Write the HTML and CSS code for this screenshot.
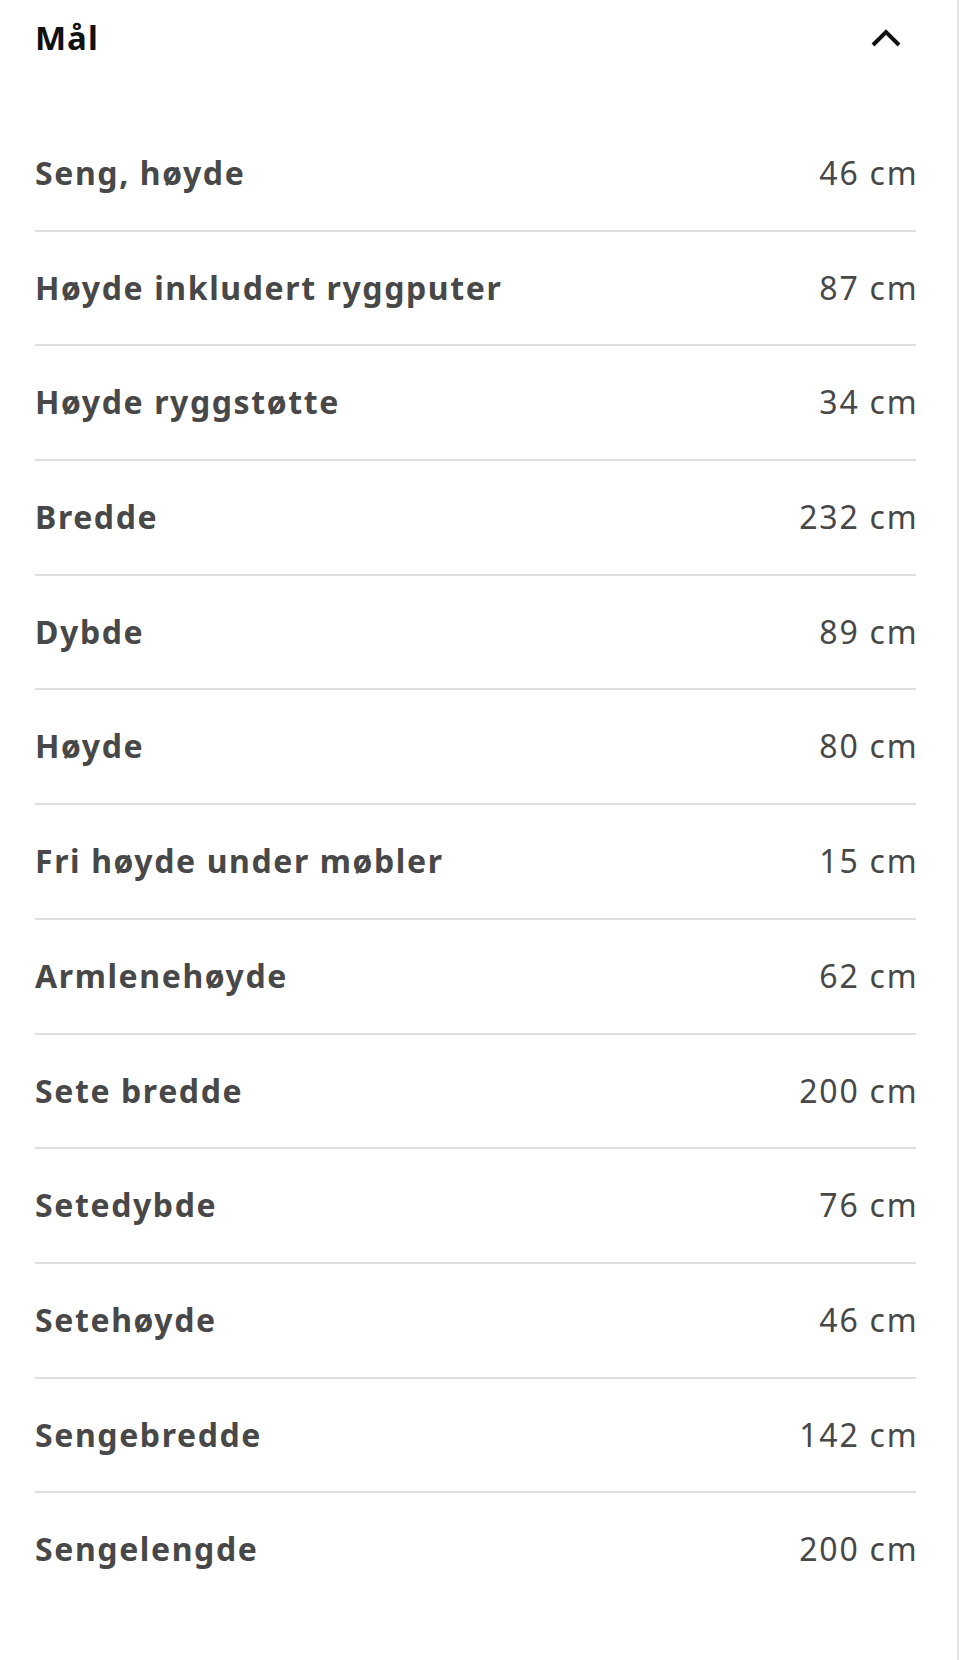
FILE: index.html
```html
<!DOCTYPE html>
<html lang="nb">
<head>
  <meta charset="UTF-8" />
  <meta name="viewport" content="width=device-width, initial-scale=1.0"/>
  <title>Mål</title>
  <link rel="stylesheet" href="styles.css">
</head>
<body>
  <div class="panel">
    <div class="panel-head">
      <h2>Mål</h2>
      <button class="toggle" aria-label="Skjul">
        <svg width="30" height="20" viewBox="0 0 30 20"><path d="M2 17 L15 4 L28 17" fill="none" stroke="#111" stroke-width="4"/></svg>
      </button>
    </div>

    <dl class="dims">
      <div class="row"><dt>Seng, høyde</dt><dd>46 cm</dd></div>
      <div class="row"><dt>Høyde inkludert ryggputer</dt><dd>87 cm</dd></div>
      <div class="row"><dt>Høyde ryggstøtte</dt><dd>34 cm</dd></div>
      <div class="row"><dt>Bredde</dt><dd>232 cm</dd></div>
      <div class="row"><dt>Dybde</dt><dd>89 cm</dd></div>
      <div class="row"><dt>Høyde</dt><dd>80 cm</dd></div>
      <div class="row"><dt>Fri høyde under møbler</dt><dd>15 cm</dd></div>
      <div class="row"><dt>Armlenehøyde</dt><dd>62 cm</dd></div>
      <div class="row"><dt>Sete bredde</dt><dd>200 cm</dd></div>
      <div class="row"><dt>Setedybde</dt><dd>76 cm</dd></div>
      <div class="row"><dt>Setehøyde</dt><dd>46 cm</dd></div>
      <div class="row"><dt>Sengebredde</dt><dd>142 cm</dd></div>
      <div class="row"><dt>Sengelengde</dt><dd>200 cm</dd></div>
    </dl>
  </div>
</body>
</html>
```

FILE: styles.css
```css
body { margin: 0; background: #fff; font-family: "Noto Sans", "Open Sans", sans-serif; }
.panel {
  width: 959px; height: 1660px;
  border-right: 2px solid #e4e4e4;
  padding: 0 41px 0 35px; box-sizing: border-box;
}
.panel-head {
  display: flex; justify-content: space-between; align-items: center;
  padding: 17px 0; margin-bottom: 41px;
}
.panel-head h2 {
  margin: 0; font-size: 33px; line-height: 42px; font-weight: 700;
  letter-spacing: 1px; color: #111;
}
.toggle {
  border: none; background: none; padding: 0; margin-right: 15px;
  display: flex; cursor: pointer;
}
.dims { margin: 0; }
.row {
  display: flex; justify-content: space-between; align-items: center;
  padding: 35px 0 35.7px; line-height: 42px;
  border-bottom: 2px solid #dfdfdf;
  font-size: 32px; color: #484848;
}
.row:last-child { border-bottom: none; }
.row dt { font-weight: 700; letter-spacing: 1.6px; }
.row dd { margin: 0 -2.5px 0 0; font-weight: 400; letter-spacing: 1.8px; }
```
